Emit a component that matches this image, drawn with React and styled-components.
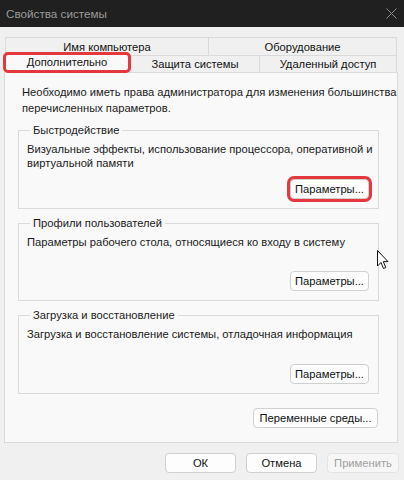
import React from 'react'
import styled, { createGlobalStyle } from 'styled-components'

const GlobalStyle = createGlobalStyle`
    html, body {
        margin: 0;
        padding: 0;
        background: #f0f0f0;
    }
    body {
        font-family: "Liberation Sans", Arial, sans-serif;
        font-size: 11.2px;
        color: #1a1a1a;
    }
`;

const Window = styled.div`
    position: relative;
    width: 404px;
    height: 480px;
    display: flex;
    flex-direction: column;
    background: #f0f0f0;
    overflow: hidden;
`;

const TitleBar = styled.div`
    height: 27px;
    flex: none;
    background: #202020;
    color: #9a9a9a;
    display: flex;
    align-items: center;
    justify-content: space-between;
    padding: 0 7px 0 6px;
    font-size: 11.7px;
`;

const CloseIcon = () => (
    <svg width="11" height="11" viewBox="0 0 11 11">
        <path d="M0.5 0.5 L10.5 10.5 M10.5 0.5 L0.5 10.5" stroke="#8c8c8c" strokeWidth="1" fill="none" />
    </svg>
);

const Body = styled.div`
    flex: 1;
    display: flex;
    flex-direction: column;
    padding: 10px 6px 0 4px;
`;

const TabRow = styled.div`
    display: flex;
    height: ${p => p.$h}px;
    margin-left: ${p => p.$indent || 0}px;
    margin-right: 1px;
`;

const Tab = styled.div`
    width: ${p => p.$w}px;
    flex: none;
    box-sizing: border-box;
    display: flex;
    align-items: center;
    justify-content: center;
    border: 1px solid #dadada;
    border-bottom: none;
    border-left-width: ${p => (p.$first ? 1 : 0)}px;
    background: #f0f0f0;
    color: #111;
`;

const ActiveTab = styled.div`
    position: relative;
    z-index: 1;
    width: ${p => p.$w}px;
    flex: none;
    box-sizing: border-box;
    margin: -3px 0 -1px -2px;
    display: flex;
    align-items: center;
    justify-content: center;
    border: 3px solid #e5383e;
    border-radius: 5px;
    background: #f9f9f9;
    color: #111;
    padding-bottom: 1px;
`;

const Panel = styled.div`
    height: 371px;
    box-sizing: border-box;
    border: 1px solid #dadada;
    background: #f9f9f9;
    display: flex;
    flex-direction: column;
    padding: 11px 18px 0 13px;
`;

const Intro = styled.p`
    margin: 0 0 6px 4px;
    line-height: 16px;
    white-space: nowrap;
`;

const Group = styled.fieldset`
    margin: 0 0 6px 0;
    padding: 4px 0 9px 8px;
    border: 1px solid #dadada;
    display: flex;
    flex-direction: column;
`;

const Legend = styled.legend`
    margin-left: 3px;
    padding: 0 3px;
    line-height: 16px;
`;

const Desc = styled.div`
    line-height: 14px;
    min-height: ${p => p.$h}px;
`;

const ButtonRow = styled.div`
    display: flex;
    justify-content: flex-end;
    gap: ${p => p.$gap || 0}px;
    margin-top: ${p => p.$top || 0}px;
    margin-right: ${p => p.$right || 0}px;
`;

const Button = styled.button`
    width: ${p => p.$w}px;
    height: 20px;
    box-sizing: border-box;
    padding: 0;
    font-family: inherit;
    font-size: inherit;
    color: ${p => (p.$disabled ? '#a0a0a0' : '#111')};
    background: ${p => (p.$disabled ? '#f6f6f6' : '#fdfdfd')};
    border: 1px solid ${p => (p.$disabled ? '#e4e4e4' : '#d0d0d0')};
    border-radius: 4px;
    box-shadow: ${p => (p.$highlight ? '0 0 0 3px #e5383e' : 'none')};
`;

const Cursor = styled.svg`
    position: absolute;
    left: 377px;
    top: 250px;
`;

const groups = [
    { title: 'Быстродействие', text: 'Визуальные эффекты, использование процессора, оперативной и виртуальной памяти', h: 37, highlight: true },
    { title: 'Профили пользователей', text: 'Параметры рабочего стола, относящиеся ко входу в систему', h: 36 },
    { title: 'Загрузка и восстановление', text: 'Загрузка и восстановление системы, отладочная информация', h: 37 },
];

export default function App() {
    return (
        <>
            <GlobalStyle />
            <Window>
                <TitleBar>
                    <span>Свойства системы</span>
                    <CloseIcon />
                </TitleBar>
                <Body>
                    <TabRow $h={18} $indent={1}>
                        <Tab $w={204} $first>Имя компьютера</Tab>
                        <Tab $w={188}>Оборудование</Tab>
                    </TabRow>
                    <TabRow $h={17} $indent={1}>
                        <ActiveTab $w={128}>Дополнительно</ActiveTab>
                        <Tab $w={129}>Защита системы</Tab>
                        <Tab $w={137}>Удаленный доступ</Tab>
                    </TabRow>
                    <Panel>
                        <Intro>
                            Необходимо иметь права администратора для изменения большинства
                            <br />
                            перечисленных параметров.
                        </Intro>
                        {groups.map(g => (
                            <Group key={g.title}>
                                <Legend>{g.title}</Legend>
                                <Desc $h={g.h}>{g.text}</Desc>
                                <ButtonRow $right={9}>
                                    <Button $w={79} $highlight={g.highlight}>Параметры...</Button>
                                </ButtonRow>
                            </Group>
                        ))}
                        <ButtonRow $top={8} $right={1}>
                            <Button $w={125}>Переменные среды...</Button>
                        </ButtonRow>
                    </Panel>
                    <ButtonRow $top={10} $gap={10} $right={-1}>
                        <Button $w={71}>ОК</Button>
                        <Button $w={71}>Отмена</Button>
                        <Button $w={72} $disabled>Применить</Button>
                    </ButtonRow>
                </Body>
                <Cursor width="13" height="20" viewBox="0 0 13 20">
                    <path d="M0.5 0.5 L0.5 16 L4 12.5 L6.5 18.5 L8.8 17.5 L6.3 11.6 L11 11.6 Z" fill="#fff" stroke="#111" strokeWidth="1" strokeLinejoin="round" />
                </Cursor>
            </Window>
        </>
    );
}
